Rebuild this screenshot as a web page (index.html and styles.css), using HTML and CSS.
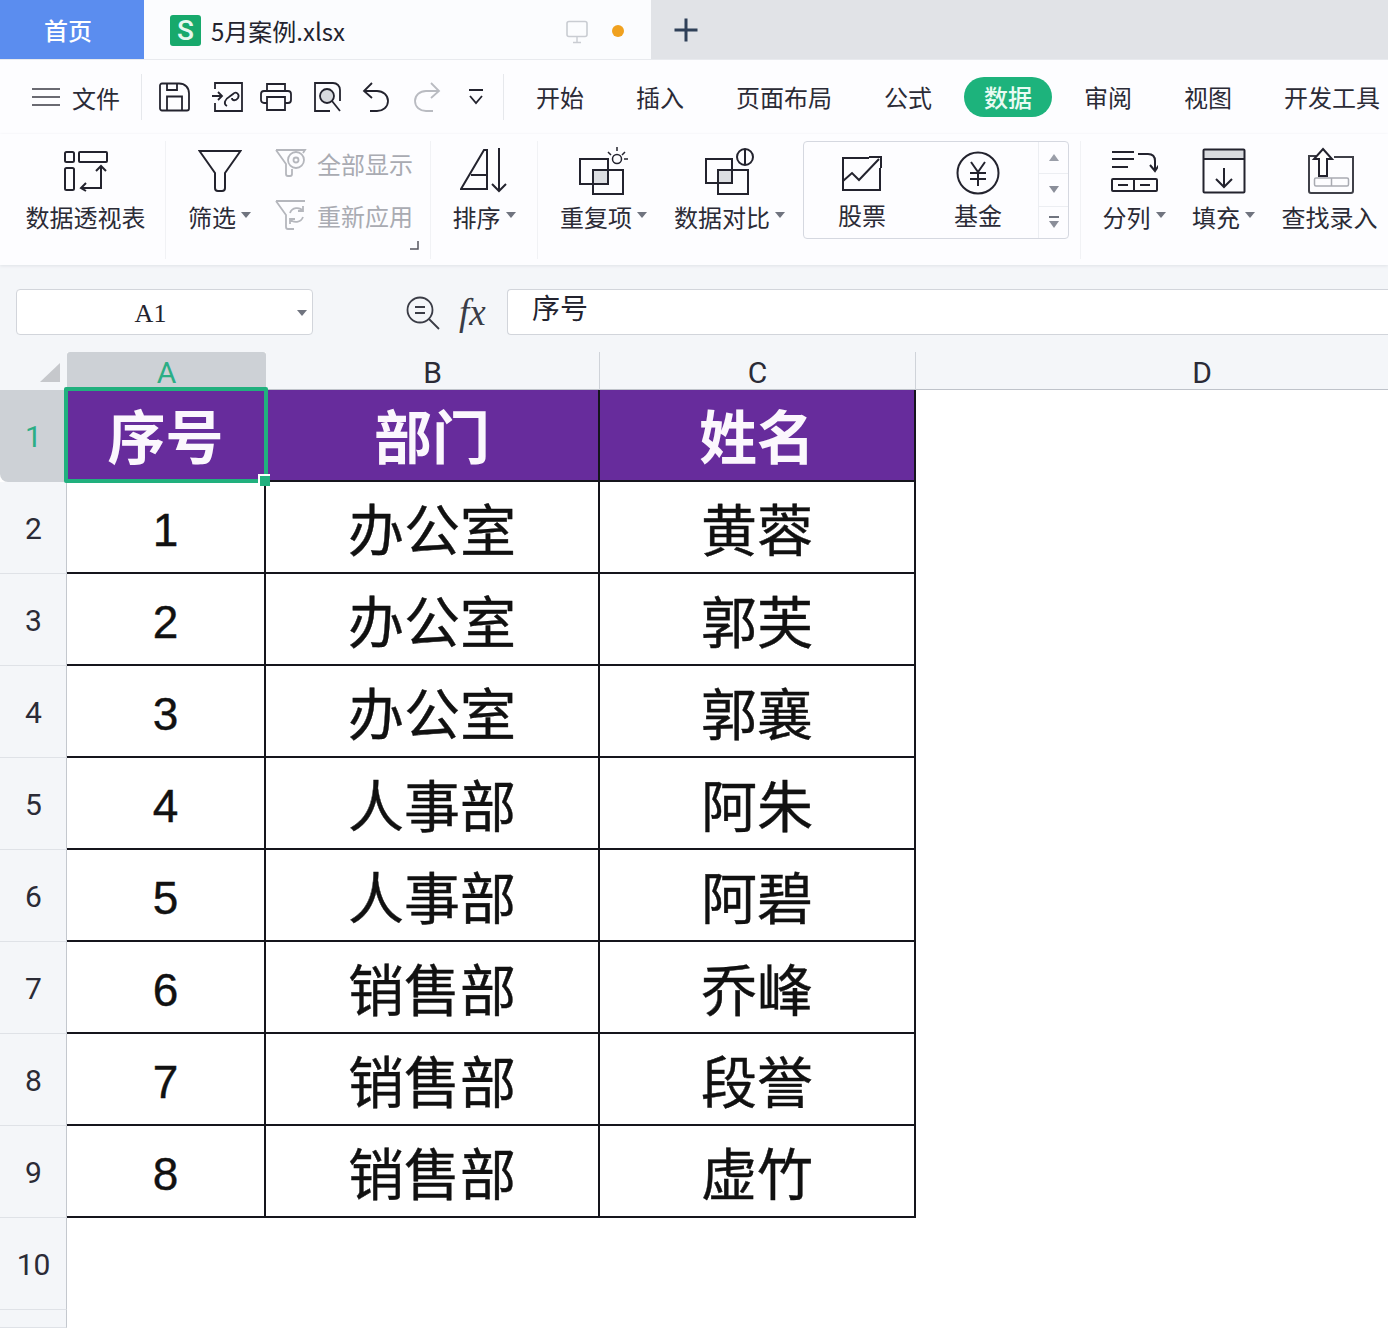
FILE: index.html
```html
<!DOCTYPE html>
<html lang="zh-CN">
<head>
<meta charset="utf-8">
<title>5月案例.xlsx</title>
<link rel="stylesheet" href="styles.css">
</head>
<body>
<div class="app">
  <header class="tabbar">
    <div class="tab-home">首页</div>
    <div class="tab-doc">
      <span class="logo">S</span>
      <span class="doc-name">5月案例.xlsx</span>
      <svg class="monitor" width="24" height="24" viewBox="0 0 24 24"><rect x="2" y="1.500" width="20" height="15" rx="2" fill="none" stroke="#c9ccd2" stroke-width="1.600"/><path d="M12 17v5M8 22.500h8" stroke="#c9ccd2" stroke-width="1.400"/></svg>
      <span class="dot"></span>
    </div>
    <svg class="plus" width="26" height="26" viewBox="0 0 26 26"><path d="M13 1.500v23M1.500 13h23" stroke="#2f4058" stroke-width="3"/></svg>
  </header>

  <nav class="menubar">
    <div class="file-menu">
      <svg width="28" height="18" viewBox="0 0 28 18"><path d="M0 1h28M0 9h28M0 17h28" stroke="#3a3a44" stroke-width="1.700"/></svg>
      <span>文件</span>
    </div>
    <div class="quick">
      <svg class="q q1" width="32" height="30" viewBox="0 0 32 30" fill="none" stroke="#23232e" stroke-width="1.800"><path d="M3 1.500h17c6 0 10 4 10 10v15a2 2 0 0 1-2 2H3a2 2 0 0 1-2-2v-23a2 2 0 0 1 2-2z"/><path d="M8 28V14.500h15V28M8 2v6h10V2"/></svg>
      <svg class="q q2" width="32" height="32" viewBox="0 0 32 32" fill="none" stroke="#23232e" stroke-width="1.800"><path d="M3 8V2h27v28H3v-8"/><path d="M0 15h9M6 11l4 4-4 4"/><path d="M15 25c-4-2-2-7 2-9l4-3c3-3 7 0 5 4-2 3-6 3-6 0"/></svg>
      <svg class="q q3" width="32" height="30" viewBox="0 0 32 30" fill="none" stroke="#23232e" stroke-width="1.800"><path d="M7 9V2h18v7"/><path d="M7 21H4a3 3 0 0 1-3-3v-6a3 3 0 0 1 3-3h24a3 3 0 0 1 3 3v6a3 3 0 0 1-3 3h-3"/><path d="M7 15h18v13H7z"/></svg>
      <svg class="q q4" width="30" height="32" viewBox="0 0 30 32" fill="none" stroke="#23232e" stroke-width="1.800"><path d="M17 30H2V2h18c4 0 7 3 7 7v11"/><circle cx="14" cy="15" r="7" fill="#d8dade"/><path d="M19 20l8 10"/></svg>
      <svg class="q q5" width="28" height="30" viewBox="0 0 28 30" fill="none" stroke="#23232e" stroke-width="1.800"><path d="M10 1L2 9l8 7"/><path d="M2 9h13c6 0 11 4 11 10s-5 10-11 10H8"/></svg>
      <svg class="q q6" width="28" height="30" viewBox="0 0 28 30" fill="none" stroke="#b9bbc1" stroke-width="1.800"><path d="M18 1l8 8-8 7"/><path d="M26 9H13C7 9 2 13 2 19s5 10 11 10h7"/></svg>
      <svg class="q q7" width="18" height="18" viewBox="0 0 18 18" fill="none" stroke="#23232e" stroke-width="1.800"><path d="M2 2h14M3 8l6 7 6-7"/></svg>
    </div>
    <div class="menu-items">
      <span>开始</span>
      <span>插入</span>
      <span>页面布局</span>
      <span>公式</span>
      <span class="active">数据</span>
      <span>审阅</span>
      <span>视图</span>
      <span>开发工具</span>
    </div>
  </nav>

  <section class="ribbon">
    <div class="rib w-pivot">
      <svg class="ic" width="46" height="40" viewBox="0 0 46 40" fill="none" stroke="#23232e" stroke-width="2"><rect x="2" y="1" width="9" height="10" rx="1.500"/><rect x="2" y="17" width="9" height="22" rx="1.500"/><rect x="16" y="1" width="28" height="10" rx="1"/><path d="M38 15v22H18M33 20l5-5 5 5M23 32l-5 5 5 3"/></svg>
      <span class="label">数据透视表</span>
    </div>
    <div class="rib w-filter">
      <svg class="ic" width="44" height="44" viewBox="0 0 44 44" fill="none" stroke="#23232e" stroke-width="2"><path d="M1.500 2h41L27 24v15a3 3 0 0 1-3 3h-4a3 3 0 0 1-3-3V24z"/></svg>
      <span class="label">筛选<i class="caret"></i></span>
    </div>
    <div class="rib-pair">
      <div class="pair-row">
        <svg width="32" height="30" viewBox="0 0 32 30" fill="none" stroke="#b5b7bd" stroke-width="1.800"><path d="M1 2h29l-2 3M1 2l10 14v10a2 2 0 0 0 2 2h2a2 2 0 0 0 2-2v-5"/><circle cx="21" cy="12" r="8"/><circle cx="21" cy="12" r="2.500"/></svg>
        <span>全部显示</span>
      </div>
      <div class="pair-row">
        <svg width="32" height="32" viewBox="0 0 32 32" fill="none" stroke="#b5b7bd" stroke-width="1.800"><path d="M1 2h29M1 2l10 14v12a2 2 0 0 0 2 2h6"/><path d="M28 12a7.500 7.500 0 0 0-13 2M15 20a7.500 7.500 0 0 0 13-2M28 7v5h-5M15 25v-5h5"/></svg>
        <span>重新应用</span>
      </div>
      <svg class="corner" width="9" height="9" viewBox="0 0 9 9" fill="none" stroke="#55565f" stroke-width="1.500"><path d="M8 0v8H0"/></svg>
    </div>
    <div class="rib w-sort">
      <svg class="ic" width="48" height="46" viewBox="0 0 48 46" fill="none" stroke="#23232e" stroke-width="2"><path d="M1 41h26V2h-3zM11 27h16"/><path d="M39 0v43M32 36l7 7 7-7"/></svg>
      <span class="label">排序<i class="caret"></i></span>
    </div>
    <div class="rib w-dup">
      <svg class="ic" width="50" height="48" viewBox="0 0 50 48" fill="none" stroke="#23232e" stroke-width="2"><rect x="14" y="24" width="15" height="14" fill="#dcdee2" stroke="none"/><rect x="1" y="12" width="28" height="25"/><rect x="14" y="23" width="30" height="24"/><g stroke-width="1.500"><circle cx="38" cy="12" r="4.500"/><path d="M38 0v4M46 5l-3 3M49 12h-4M29 5l3 3"/></g></svg>
      <span class="label">重复项<i class="caret"></i></span>
    </div>
    <div class="rib w-cmp">
      <svg class="ic" width="50" height="48" viewBox="0 0 50 48" fill="none" stroke="#23232e" stroke-width="2"><rect x="13" y="23" width="14" height="13" fill="#dcdee2" stroke="none"/><rect x="1" y="12" width="26" height="24"/><rect x="13" y="23" width="30" height="24"/><circle cx="40" cy="10" r="8"/><path d="M40 2v16"/></svg>
      <span class="label">数据对比<i class="caret"></i></span>
    </div>
    <div class="gallery">
      <div class="g-item g-stock">
        <svg class="ic" width="42" height="36" viewBox="0 0 42 36" fill="none" stroke="#23232e" stroke-width="2"><path d="M28 3H2v32h37V13"/><path d="M2 26l9-8 7 7L38 4M28 2h12v11"/></svg>
        <span>股票</span>
      </div>
      <div class="g-item g-fund">
        <svg class="ic" width="44" height="44" viewBox="0 0 44 44" fill="none" stroke="#23232e" stroke-width="2"><circle cx="22" cy="22" r="20.500"/><path d="M15 11l7 10 7-10M14 22h16M14 28h16M22 21v14"/></svg>
        <span>基金</span>
      </div>
      <div class="g-scroll">
        <div class="g-btn"><i class="tri-up"></i></div>
        <div class="g-btn"><i class="tri-down"></i></div>
        <div class="g-btn g-more"><b></b><i class="tri-down"></i></div>
      </div>
    </div>
    <div class="rib w-split">
      <svg class="ic" width="48" height="44" viewBox="0 0 48 44" fill="none" stroke="#23232e" stroke-width="2"><path d="M2 3h22M2 10h22M2 18h16M28 5h10c5 0 7 3 7 7v9M40 16l5 6 4-6"/><rect x="2" y="30" width="45" height="12" rx="1"/><path d="M24 30v12M8 36h10M30 36h10"/></svg>
      <span class="label">分列<i class="caret"></i></span>
    </div>
    <div class="rib w-fill">
      <svg class="ic" width="44" height="46" viewBox="0 0 44 46" fill="none" stroke="#23232e" stroke-width="2"><rect x="2" y="2" width="40" height="9" fill="#d9dbdf" stroke="none"/><rect x="1.500" y="1.500" width="41" height="43" rx="1"/><path d="M2 11h40M22 20v19M14 31l8 8 8-8"/></svg>
      <span class="label">填充<i class="caret"></i></span>
    </div>
    <div class="rib w-look">
      <svg class="ic" width="48" height="46" viewBox="0 0 48 46" fill="none" stroke="#3f4048" stroke-width="2"><path d="M10 8H3v35a2 2 0 0 0 2 2h40a2 2 0 0 0 2-2V9H28"/><path d="M17 1l9 10h-5v17h-8V11H8z" stroke="#23232e" fill="#fff"/><rect x="8.500" y="30" width="34" height="8" rx="1.500" stroke="#a9abb2" stroke-width="1.500"/><path d="M25.500 30v8" stroke="#a9abb2" stroke-width="1.500"/></svg>
      <span class="label">查找录入</span>
    </div>
  </section>

  <section class="formula">
    <div class="namebox"><span>A1</span><i class="caret"></i></div>
    <svg class="zoom-ic" width="34" height="34" viewBox="0 0 34 34" fill="none" stroke="#3a3c46" stroke-width="1.800"><circle cx="14" cy="14" r="12.500"/><path d="M9 11h10M9 17h10M23 23l10 10"/></svg>
    <span class="fx">fx</span>
    <div class="fx-input">序号</div>
  </section>

  <main class="sheet">
    <div class="corner-cell"><span class="all-tri"></span></div>
    <div class="ch selected">A</div>
    <div class="ch">B</div>
    <div class="ch">C</div>
    <div class="ch ch-d">D</div>
    <div class="blank-d"></div>

    <div class="rh rh-on">1</div>
    <div class="cell head sel">序号<span class="sel-box"><span class="sel-handle"></span></span></div>
    <div class="cell head">部门</div>
    <div class="cell head">姓名</div>

    <div class="rh">2</div><div class="cell num">1</div><div class="cell">办公室</div><div class="cell">黄蓉</div>
    <div class="rh">3</div><div class="cell num">2</div><div class="cell">办公室</div><div class="cell">郭芙</div>
    <div class="rh">4</div><div class="cell num">3</div><div class="cell">办公室</div><div class="cell">郭襄</div>
    <div class="rh">5</div><div class="cell num">4</div><div class="cell">人事部</div><div class="cell">阿朱</div>
    <div class="rh">6</div><div class="cell num">5</div><div class="cell">人事部</div><div class="cell">阿碧</div>
    <div class="rh">7</div><div class="cell num">6</div><div class="cell">销售部</div><div class="cell">乔峰</div>
    <div class="rh">8</div><div class="cell num">7</div><div class="cell">销售部</div><div class="cell">段誉</div>
    <div class="rh">9</div><div class="cell num">8</div><div class="cell">销售部</div><div class="cell">虚竹</div>

    <div class="rh">10</div><div class="blank-row"></div>
    <div class="rh"></div><div class="blank-row"></div>
  </main>
</div>
</body>
</html>
```
FILE: styles.css
```css
* { box-sizing: border-box; }
html, body { margin: 0; padding: 0; }
body {
  width: 1388px;
  height: 1328px;
  overflow: hidden;
  background: #fff;
  font-family: "Noto Sans CJK SC", "Noto Sans", sans-serif;
  color: #2b2b36;
}
.app { display: flex; flex-direction: column; width: 1388px; height: 1328px; }

/* tab bar */
.tabbar {
  display: flex;
  align-items: stretch;
  height: 60px;
  background: #e1e3e7;
  border-bottom: 1px solid #e8eaee;
  flex: none;
}
.tab-home {
  width: 144px;
  background: #5b8def;
  color: #fff;
  font-size: 24px;
  font-weight: 500;
  display: flex;
  align-items: center;
  justify-content: center;
  padding: 0 8px 1px 0;
  margin-right: 4px;
  box-shadow: 4px 0 0 #fbfcfe;
}
.tab-doc {
  width: 503px;
  background: #fbfcfe;
  display: flex;
  align-items: center;
  padding-left: 22px;
  padding-top: 2px;
}
.logo {
  width: 31px;
  height: 31px;
  border-radius: 3px;
  background: #17a96c;
  color: #e6f8ef;
  font: 500 28px/31px "Roboto", sans-serif;
  text-align: center;
}
.doc-name { font-size: 24px; margin-left: 10px; width: 354px; color: #23232e; line-height: 30px; }
.monitor { margin-right: 23px; margin-top: 2px; flex: none; }
.dot { width: 12px; height: 12px; border-radius: 50%; background: #f0a11f; flex: none; }
.plus { margin: 17px 0 0 22px; }

/* menu row */
.menubar {
  display: flex;
  align-items: center;
  height: 74px;
  flex: none;
  background: #fdfdff;
  font-size: 24px;
  position: relative;
}
.file-menu {
  display: flex;
  align-items: center;
  gap: 12px;
  width: 142px;
  height: 46px;
  padding-left: 32px;
  border-right: 1px solid #e6e8ec;
  color: #2b2b36;
}
.quick {
  display: flex;
  align-items: center;
  width: 362px;
  height: 46px;
  padding-left: 17px;
  border-right: 1px solid #e6e8ec;
}
.q { flex: none; }
.q2 { margin-left: 21px; }
.q3 { margin-left: 16px; }
.q4 { margin-left: 21px; }
.q5 { margin-left: 19px; }
.q6 { margin-left: 23px; }
.q7 { margin-left: 26px; }
.menu-items {
  display: flex;
  align-items: center;
  gap: 52px;
  padding-left: 32px;
  white-space: nowrap;
}
.menu-items span { line-height: 40px; }
.menu-items .active {
  background: #1db37c;
  color: #e9fbf3;
  border-radius: 20px;
  padding: 0 20px;
  margin: 0 -20px;
  font-weight: 500;
}

/* ribbon */
.ribbon {
  display: flex;
  height: 131px;
  flex: none;
  padding: 7px 0 0 6px;
  background: #fdfdff;
  box-shadow: 0 1px 3px #dfe2e7;
  position: relative;
  font-size: 24px;
}
.rib {
  display: flex;
  flex-direction: column;
  align-items: center;
  height: 118px;
  flex: none;
  border-right: 1px solid transparent;
}
.rib .ic { height: 50px; margin-top: 5px; flex: none; }
.label { line-height: 32px; margin-top: 5px; white-space: nowrap; display: flex; align-items: center; }
.w-pivot { width: 160px; border-right-color: #f1f2f5; }
.w-filter { width: 108px; }
.w-sort { width: 108px; border-right-color: #f1f2f5; border-left: 1px solid #f1f2f5; }
.w-dup { width: 132px; }
.w-cmp { width: 120px; }
.w-split { width: 108px; border-left: 1px solid #f1f2f5; }
.w-fill { width: 72px; margin-right: 12px; }
.w-look { width: 116px; }
.caret {
  display: inline-block;
  width: 0;
  height: 0;
  border: 5px solid transparent;
  border-top: 6px solid #70747f;
  border-bottom: 0;
  margin-left: 5px;
  margin-top: -4px;
}
.rib-pair {
  width: 156px;
  height: 118px;
  flex: none;
  position: relative;
  color: #a9abb2;
  display: flex;
  flex-direction: column;
  padding-left: 1px;
}
.pair-row { display: flex; align-items: center; gap: 10px; height: 52px; }
.pair-row:first-child { margin-top: -4px; }
.corner { position: absolute; right: 11px; bottom: 9px; }

.gallery {
  width: 266px;
  height: 98px;
  margin: 0 11px 0 13px;
  flex: none;
  border: 1px solid #d5d8e0;
  border-radius: 4px;
  background: #fdfdff;
  display: flex;
  position: relative;
}
.g-item { display: flex; flex-direction: column; align-items: center; width: 116px; flex: none; }
.g-item span { line-height: 32px; margin-top: 4px; }
.g-item .ic { margin-top: 9px; height: 44px; flex: none; }
.g-scroll {
  margin-left: auto;
  width: 30px;
  border-left: 1px solid #eceef2;
  display: flex;
  flex-direction: column;
}
.g-btn { flex: 1; display: flex; align-items: center; justify-content: center; flex-direction: column; gap: 3px; border-bottom: 1px solid #eceef2; }
.g-btn:last-child { border-bottom: 0; }
.g-more b { display: block; width: 10px; height: 2px; background: #70747f; }
.tri-up, .tri-down { display: block; width: 0; height: 0; border: 5px solid transparent; }
.tri-up { border-bottom: 7px solid #9a9ea8; border-top: 0; }
.tri-down { border-top: 7px solid #8a8e99; border-bottom: 0; }

/* formula bar */
.formula {
  height: 87px;
  flex: none;
  background: #f4f6f9;
  display: flex;
  align-items: flex-start;
  padding: 24px 0 0 16px;
}
.namebox {
  width: 297px;
  height: 46px;
  background: #fff;
  border: 1px solid #d2d5db;
  border-radius: 4px;
  display: flex;
  align-items: center;
  position: relative;
  justify-content: center;
  font: 26px "Liberation Serif", serif;
  color: #23232e;
  padding: 4px 28px 0 0;
}
.namebox .caret { position: absolute; right: 5px; top: 20px; margin: 0; }
.zoom-ic { margin: 7px 0 0 93px; flex: none; }
.fx {
  font: italic 37px/40px "Liberation Serif", serif;
  color: #3a3c46;
  margin: 4px 0 0 19px;
  width: 48px;
  flex: none;
}
.fx-input {
  flex: 1;
  height: 46px;
  background: #fff;
  border: 1px solid #d2d5db;
  border-right: 0;
  border-radius: 4px 0 0 4px;
  font-size: 28px;
  line-height: 34px;
  padding-left: 24px;
  color: #23232e;
}

/* sheet */
.sheet {
  flex: 1;
  display: grid;
  grid-template-columns: 67px 199px 334px 316px 1fr;
  grid-template-rows: 38px repeat(10, 92px) 18px;
  background: #fff;
}
.corner-cell { background: #f4f6f9; position: relative; }
.all-tri {
  position: absolute;
  right: 7px;
  bottom: 8px;
  width: 20px;
  height: 19px;
  background: #c6c8cc;
  clip-path: polygon(100% 0, 100% 100%, 0 100%);
}
.ch {
  background: #f4f6f9;
  font: 30px/42px "Roboto", sans-serif;
  text-align: center;
  color: #2b2b36;
  border-right: 1px solid #cfd3d9;
  border-bottom: 1px solid #bfc3ca;
}
.ch.selected {
  background: #cdd1d6;
  color: #2bae85;
  border-radius: 3px 3px 0 0;
  border-right: 0;
}
.ch-d { border-right: 0; padding-left: 100px; }
.blank-d { grid-column: 5; grid-row: 2 / -1; background: #fff; }
.rh {
  background: #f4f6f9;
  border-right: 1px solid #c4c8ce;
  border-bottom: 1px solid #dfe2e7;
  font: 30px/94px "Roboto", sans-serif;
  text-align: center;
  color: #2b2b36;
  padding-left: 1px;
}
.rh-on {
  background: #cdd1d6;
  color: #2bae85;
  border-radius: 0 0 0 8px;
  border-bottom: 0;
}
.blank-row { grid-column: 2 / 5; background: #fff; }
.cell {
  background: #fff;
  border-right: 2px solid #15151c;
  border-bottom: 2px solid #15151c;
  font-size: 56px;
  font-weight: 400;
  -webkit-text-stroke: 0.4px #111;
  line-height: 89px;
  text-align: center;
  color: #111;
  position: relative;
}
.cell.num { font: 46px/96px "Liberation Sans", sans-serif; }
.cell.head {
  background: #672c9c;
  color: #fbf7fd;
  -webkit-text-stroke: 0;
  font-weight: 700;
  font-size: 58px;
  line-height: 88px;
}
.cell.sel { z-index: 2; }
.sel-box {
  position: absolute;
  left: -3px;
  top: -3px;
  width: 204px;
  height: 96px;
  border: 4px solid #21b07e;
  border-radius: 2px;
}
.sel-handle {
  position: absolute;
  right: -6px;
  bottom: -7px;
  width: 12px;
  height: 12px;
  background: #21b07e;
  border: 2px solid #fff;
  border-width: 2px 0 0 2px;
}
```
